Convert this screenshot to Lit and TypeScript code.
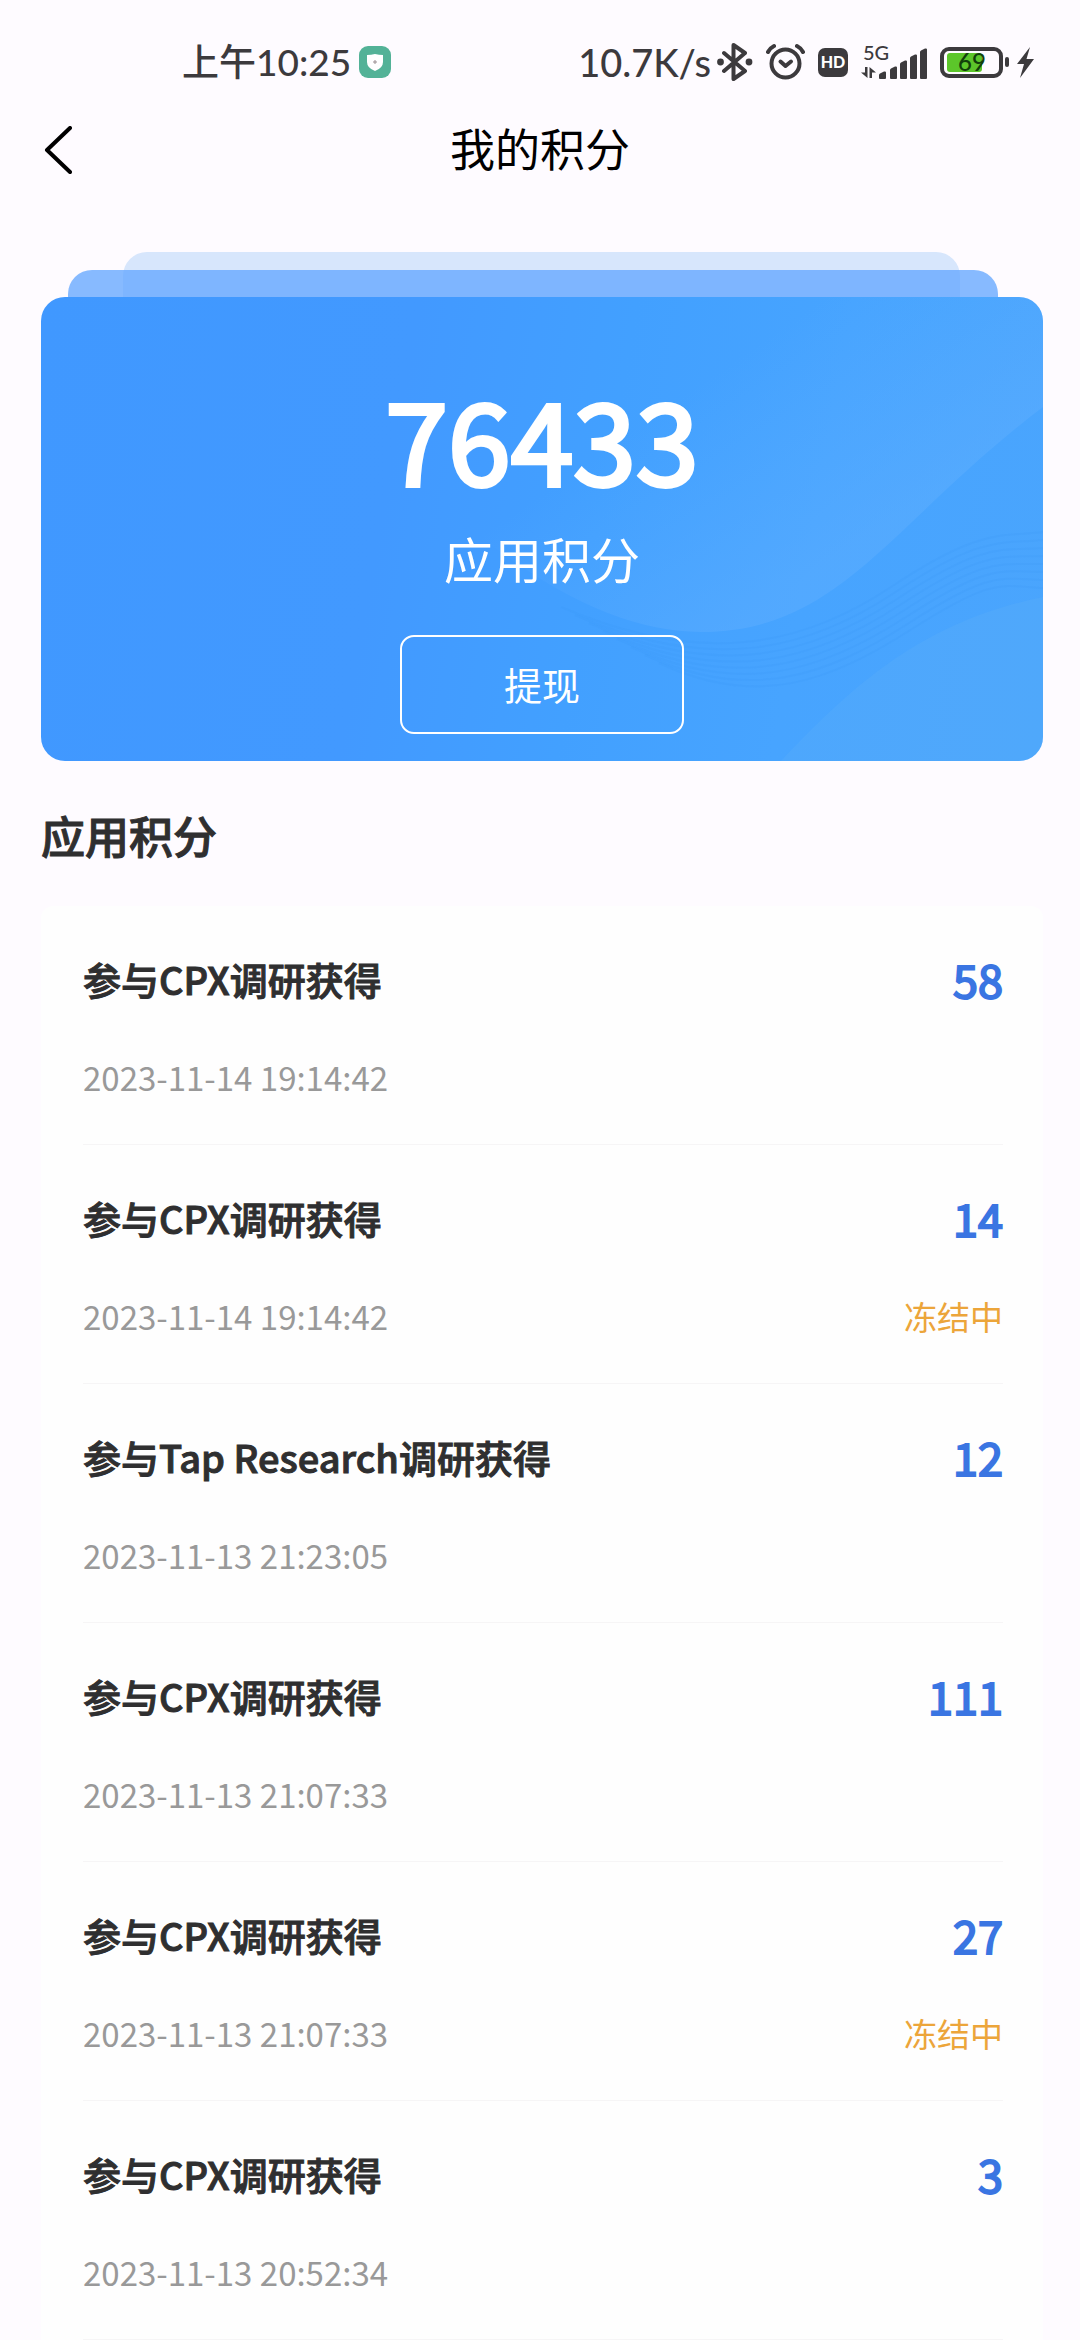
import { LitElement, html, css, svg, nothing } from "lit";
import { customElement, property } from "lit/decorators.js";

interface PointRecord {
  title: string;
  time: string;
  points: number;
  frozen?: boolean;
}

const RECORDS: PointRecord[] = [
  { title: "参与CPX调研获得", time: "2023-11-14 19:14:42", points: 58 },
  { title: "参与CPX调研获得", time: "2023-11-14 19:14:42", points: 14, frozen: true },
  { title: "参与Tap Research调研获得", time: "2023-11-13 21:23:05", points: 12 },
  { title: "参与CPX调研获得", time: "2023-11-13 21:07:33", points: 111 },
  { title: "参与CPX调研获得", time: "2023-11-13 21:07:33", points: 27, frozen: true },
  { title: "参与CPX调研获得", time: "2023-11-13 20:52:34", points: 3 },
];

@customElement("status-bar")
export class StatusBar extends LitElement {
  static styles = css`
    :host {
      display: block;
      font-family: Lato, "Noto Sans CJK SC", sans-serif;
      color: #3c3a3d;
    }
    .bar {
      display: flex;
      align-items: center;
      justify-content: space-between;
      padding: 38px 46px 0 182px;
      height: 48px;
    }
    .side {
      display: flex;
      align-items: center;
    }
    .left {
      gap: 8px;
    }
    .right {
      gap: 6px;
    }
    .icons {
      display: flex;
      align-items: center;
      gap: 13px;
    }
    .text {
      font-size: 37px;
      line-height: 48px;
      font-weight: 500;
      white-space: nowrap;
    }
    .right .text {
      font-size: 38px;
    }
    svg {
      display: block;
    }
    .hd {
      font: 900 16px Lato, sans-serif;
      fill: #fff;
    }
    .net {
      font: 500 20px Lato, sans-serif;
      fill: #3c3a3d;
    }
    .level {
      font: 500 24px Lato, sans-serif;
      fill: #12400a;
    }
  `;

  render() {
    return html`
      <div class="bar">
        <div class="side left">
          <span class="text">上午10:25</span>
          <svg width="32" height="32" viewBox="0 0 32 32" aria-hidden="true">
            <rect width="32" height="32" rx="9" fill="#53b297" />
            <path d="M8 9q4 0 8-1q4 1 8 1v7q0 6-8 9q-8-3-8-9z" fill="#fff" />
            <path d="M14 16h4M16 14v4" stroke="#9a8f92" stroke-width="1" />
          </svg>
        </div>
        <div class="side right">
          <span class="text">10.7K/s</span>
          <div class="icons">
            <svg width="36" height="38" viewBox="0 0 36 38" fill="none" stroke="#3c3a3d" stroke-width="4" stroke-linejoin="round" stroke-linecap="round" aria-hidden="true">
              <path d="M7 10l21 18l-11.500 8V2l11.500 8L7 28" />
              <circle cx="3.500" cy="19" r="3.400" fill="#3c3a3d" stroke="none" />
              <circle cx="32" cy="19" r="3.400" fill="#3c3a3d" stroke="none" />
            </svg>
            <svg width="39" height="38" viewBox="0 0 39 38" fill="none" stroke="#3c3a3d" stroke-width="4" stroke-linecap="round" stroke-linejoin="round" aria-hidden="true">
              <circle cx="19.500" cy="20.500" r="14" />
              <path d="M14.500 18.500l5 4.500l5.500-4.500" />
              <path d="M2 9q2-4 6-6M31 3q4 2 6 6" />
            </svg>
            <svg width="30" height="29" viewBox="0 0 30 29" aria-label="HD">
              <rect width="30" height="29" rx="7" fill="#3c3a3d" />
              <text class="hd" x="15" y="20" text-anchor="middle">HD</text>
            </svg>
            <svg width="66" height="46" viewBox="0 -6 66 46" fill="#3c3a3d" aria-label="5G">
              <text class="net" x="2" y="15">5G</text>
              <path d="M4 22h2.500v11L0 27.500h4zM8.500 33V22l6.500 5.500h-4V33z" />
              ${[
                [18, 27],
                [29, 22],
                [39, 16],
                [49, 10],
                [59, 4],
              ].map(
                ([x, y]) =>
                  svg`<path d="M${x} ${y + 3}q0-1 1-1.500l4-2q2-.5 2 1V33q0 1-1 1h-5q-1 0-1-1z" />`
              )}
            </svg>
            <svg width="94" height="31" viewBox="0 0 94 31" aria-label="69%">
              <rect x="2" y="2" width="59" height="27" rx="7" fill="none" stroke="#3c3a3d" stroke-width="4" />
              <rect x="7" y="6" width="35" height="19" rx="3" fill="#5cc62a" />
              <text class="level" x="32" y="24" text-anchor="middle">69</text>
              <rect x="65" y="10" width="4" height="10" rx="2" fill="#3c3a3d" />
              <path d="M90 0L77 17h7l-4 14L94 12h-7.500z" fill="#3c3a3d" />
            </svg>
          </div>
        </div>
      </div>
    `;
  }
}

@customElement("points-card")
export class PointsCard extends LitElement {
  @property({ type: Number }) total = 0;

  static styles = css`
    :host {
      display: block;
    }
    .layer {
      border-radius: 24px 24px 0 0;
    }
    .back {
      margin: 0 83px 0 82px;
      height: 45px;
      background: #d7e6fc;
    }
    .middle {
      margin: -27px 45px 0 27px;
      height: 27px;
      background: rgba(97, 165, 255, 0.76);
    }
    .card {
      position: relative;
      display: flex;
      flex-direction: column;
      align-items: center;
      padding: 80px 0 27px;
      border-radius: 24px;
      overflow: hidden;
      background: linear-gradient(100deg, #4098ff 0%, #4299ff 35%, #42a0ff 55%, #47a4ff 75%, #4aa5fd 100%);
      color: #fff;
    }
    .waves {
      position: absolute;
      inset: 0;
      width: 100%;
      height: 100%;
    }
    .total {
      position: relative;
      font-size: 113px;
      line-height: 120px;
      -webkit-text-stroke: 4px currentColor;
    }
    .label {
      position: relative;
      margin-top: 31px;
      font-size: 49px;
      line-height: 60px;
    }
    .withdraw {
      position: relative;
      margin-top: 47px;
      width: 284px;
      height: 99px;
      padding: 0 0 2px;
      border: 2px solid #fff;
      border-radius: 14px;
      background: none;
      color: inherit;
      font: inherit;
      font-size: 38px;
      line-height: 48px;
    }
  `;

  render() {
    return html`
      <div class="layer back"></div>
      <div class="layer middle"></div>
      <section class="card">
        <svg class="waves" viewBox="0 0 1002 464" preserveAspectRatio="none" aria-hidden="true">
          <defs>
            <linearGradient id="sheen" gradientUnits="userSpaceOnUse" x1="560" y1="40" x2="740" y2="300">
              <stop offset="0.300" stop-color="#60afff" stop-opacity="0" />
              <stop offset="1" stop-color="#60afff" stop-opacity="0.450" />
            </linearGradient>
          </defs>
          <path d="M440 240Q560 335 660 335C800 335 850 225 1002 110V0H440z" fill="url(#sheen)" />
          <path d="M740 464C810 390 880 325 1002 300V464z" fill="#5cb0f8" fill-opacity="0.300" />
          <g fill="none" stroke="#3b93f2" stroke-opacity="0.160" stroke-width="2">
            ${[0, 1, 2, 3, 4, 5, 6, 7].map(
              (i) =>
                svg`<path d="M${520 + i * 14} ${310 + i * 8}C${660 + i * 8} ${370 + i * 6} ${760 + i * 4} ${350 + i * 5} ${850 + i * 3} ${290 + i * 6}S${960} ${240 + i * 7} 1002 ${235 + i * 8}" />`
            )}
          </g>
        </svg>
        <div class="total">${this.total}</div>
        <div class="label">应用积分</div>
        <button class="withdraw" type="button">提现</button>
      </section>
    `;
  }
}

@customElement("points-list")
export class PointsList extends LitElement {
  @property({ attribute: false }) records: PointRecord[] = [];

  static styles = css`
    :host {
      display: block;
    }
    .list {
      display: flex;
      flex-direction: column;
      margin: 0;
      padding: 0 40px 0 42px;
      list-style: none;
      border-radius: 12px 12px 0 0;
      background: #fefefe;
    }
    .item {
      display: flex;
      flex-direction: column;
      gap: 46px;
      padding: 45px 0 43px;
      border-bottom: 1px solid #f6f5f6;
    }
    .row {
      display: flex;
      align-items: center;
      justify-content: space-between;
    }
    .title {
      font-size: 38px;
      font-weight: 500;
      line-height: 56px;
      color: #2f2f30;
      -webkit-text-stroke: 1px currentColor;
    }
    .points {
      font-size: 45px;
      line-height: 56px;
      color: #3a75e2;
      -webkit-text-stroke: 2px currentColor;
    }
    .time {
      font-size: 33px;
      line-height: 48px;
      color: #999;
    }
    .frozen {
      font-size: 33px;
      line-height: 48px;
      color: #eca53a;
    }
  `;

  render() {
    return html`
      <ul class="list">
        ${this.records.map(
          (r) => html`
            <li class="item">
              <div class="row">
                <span class="title">${r.title}</span>
                <span class="points">${r.points}</span>
              </div>
              <div class="row">
                <time class="time">${r.time}</time>
                ${r.frozen ? html`<span class="frozen">冻结中</span>` : nothing}
              </div>
            </li>
          `
        )}
      </ul>
    `;
  }
}

@customElement("app-root")
export class AppRoot extends LitElement {
  static styles = css`
    :host {
      display: block;
      min-height: 100vh;
      background: #fefbff;
      font-family: "Noto Sans CJK SC", sans-serif;
    }
    .nav {
      display: grid;
      grid-template-columns: 80px 1fr 80px;
      align-items: center;
      margin-top: 32px;
    }
    .back {
      display: flex;
      justify-content: flex-end;
      padding: 4px 8px 0 0;
      border: 0;
      background: none;
    }
    .heading {
      margin: 0;
      text-align: center;
      font-size: 45px;
      font-weight: 400;
      line-height: 60px;
      color: #000;
    }
    .content {
      padding: 74px 37px 0 41px;
    }
    .section {
      margin: 43px 0 40px;
      font-size: 44px;
      font-weight: 500;
      line-height: 62px;
      color: #2f2f30;
      -webkit-text-stroke: 1px currentColor;
    }
  `;

  render() {
    return html`
      <status-bar></status-bar>
      <header class="nav">
        <button class="back" type="button" aria-label="返回">
          <svg width="28" height="48" viewBox="0 0 28 48" fill="none" stroke="#000" stroke-width="4" stroke-linecap="round" stroke-linejoin="round">
            <path d="M26 2L3 24l23 22" />
          </svg>
        </button>
        <h1 class="heading">我的积分</h1>
      </header>
      <main class="content">
        <points-card .total=${76433}></points-card>
        <h2 class="section">应用积分</h2>
        <points-list .records=${RECORDS}></points-list>
      </main>
    `;
  }
}
